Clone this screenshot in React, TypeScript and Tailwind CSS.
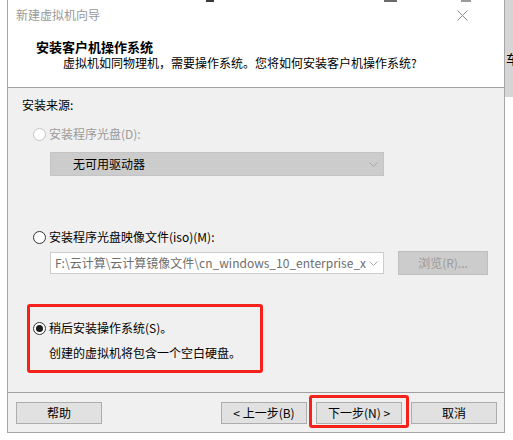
import React from "react";

const font = "font-['Noto_Sans_CJK_SC','Liberation_Sans',sans-serif]";

function Radio({ checked, disabled }: { checked?: boolean; disabled?: boolean }) {
  return (
    <span
      className={`w-[13px] h-[13px] shrink-0 rounded-full border bg-white flex items-center justify-center ${
        disabled ? "border-[#c2c2c2]" : "border-[#333333]"
      }`}
    >
      {checked && <span className="w-[7px] h-[7px] rounded-full bg-[#1b1b1b]" />}
    </span>
  );
}

function Chevron() {
  return (
    <svg width="9" height="5" viewBox="0 0 9 5" className="shrink-0">
      <path d="M0.5 0.5 L4.5 4.5 L8.5 0.5" fill="none" stroke="#a8a8a8" strokeWidth="1" />
    </svg>
  );
}

function Button({ label }: { label: string }) {
  return (
    <button className="w-[86px] h-[22px] bg-[#e1e1e1] border border-[#adadad] text-[12px] leading-[20px] text-black">
      {label}
    </button>
  );
}

export default function App() {
  return (
    <div className={`relative w-[513px] h-[440px] bg-white overflow-hidden flex ${font}`}>
      <div className="w-[7px] shrink-0" />

      {/* dialog */}
      <div className="w-[498px] h-[433px] shrink-0 border-x border-b border-[#a6a6a6] flex flex-col">
        {/* title + header */}
        <div className="h-[88px] bg-white border-b border-[#a0a0a0]">
          <div className="h-[30px] flex items-center justify-between pl-[8px] pr-[36px]">
            <span className="text-[12px] text-[#999999]">新建虚拟机向导</span>
            <svg width="11" height="11" viewBox="0 0 11 11">
              <path d="M0.5 0.5 L10.5 10.5 M10.5 0.5 L0.5 10.5" stroke="#8a8a8a" strokeWidth="1" />
            </svg>
          </div>
          <div className="mt-[9px] pl-[28px] text-[13px] leading-[16px] font-bold text-black">
            安装客户机操作系统
          </div>
          <div className="pl-[55px] text-[12px] leading-[16px] text-black">
            虚拟机如同物理机，需要操作系统。您将如何安装客户机操作系统?
          </div>
        </div>

        {/* body */}
        <div className="h-[305px] bg-[#f0f0f0] border-b border-[#a0a0a0] pl-[14px] pt-[9px] text-[12px] leading-[16px] flex flex-col">
          <div className="h-[16px] text-black">安装来源:</div>

          <div className="mt-[13px] ml-[11px] h-[16px] flex items-center gap-[3px] text-[#9a9a9a]">
            <Radio disabled />
            <span>安装程序光盘(D):</span>
          </div>

          <div className="mt-[10px] ml-[28px] w-[334px] h-[24px] bg-[#cccccc] border border-[#c4c4c4] flex items-center justify-between pl-[22px] pr-[5px]">
            <span className="text-black">无可用驱动器</span>
            <Chevron />
          </div>

          <div className="mt-[53px] ml-[11px] h-[16px] flex items-center gap-[3px] text-black">
            <Radio />
            <span>安装程序光盘映像文件(iso)(M):</span>
          </div>

          <div className="mt-[6px] ml-[28px] h-[24px] flex items-center">
            <div className="w-[334px] h-[22px] shrink-0 bg-white border border-[#cccccc] flex items-center pl-[4px] pr-[5px]">
              <span className="whitespace-nowrap text-[#6d6d6d]">F:\云计算\云计算镜像文件\cn_windows_10_enterprise_x</span>
              <span className="flex-1" />
              <Chevron />
            </div>
            <div className="ml-[14px] w-[90px] h-[24px] shrink-0 bg-[#cccccc] border border-[#bfbfbf] flex items-center justify-center text-[#9a9a9a]">
              浏览(R)...
            </div>
          </div>

          <div className="mt-[45px] ml-[11px] h-[16px] flex items-center gap-[3px] text-black">
            <Radio checked />
            <span>稍后安装操作系统(S)。</span>
          </div>

          <div className="mt-[9px] ml-[27px] h-[16px] text-black">创建的虚拟机将包含一个空白硬盘。</div>
        </div>

        {/* footer */}
        <div className="flex-1 bg-[#f0f0f0] flex items-start pt-[9px] pl-[8px] pr-[7px]">
          <Button label="帮助" />
          <span className="flex-1" />
          <div className="flex gap-[9px]">
            <Button label="< 上一步(B)" />
            <Button label="下一步(N) >" />
            <Button label="取消" />
          </div>
        </div>
      </div>

      {/* desktop behind, right edge */}
      <div className="flex-1 flex flex-col">
        <div className="h-[97px] bg-[#d6d6d6] relative overflow-hidden">
          <span className="absolute left-[1px] top-[51px] text-[13px] leading-[16px] text-black">车</span>
        </div>
      </div>

      {/* bits of windows behind at the top edge */}
      <div className="absolute left-[206px] top-0 w-[8px] h-[2px] bg-[#3a3a3a]" />
      <div className="absolute left-[384px] top-0 w-[13px] h-[2px] bg-[#6a6a6a]" />
      <div className="absolute left-[461px] top-0 w-[10px] h-[2px] bg-[#9a9a9a]" />

      {/* red annotation boxes */}
      <div className="absolute left-[27px] top-[304px] w-[236px] h-[69px] border-[3px] border-[#f5221b] rounded-[3px]" />
      <div className="absolute left-[309px] top-[395px] w-[100px] h-[33px] border-[3px] border-[#f5221b] rounded-[3px]" />
    </div>
  );
}
